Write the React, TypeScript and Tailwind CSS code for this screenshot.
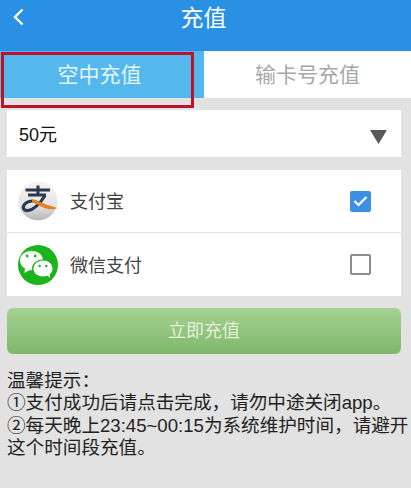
const cjk = "font-['Liberation_Sans','Noto_Sans_CJK_SC',sans-serif]";

function AlipayIcon() {
  return (
    <svg width="40" height="40" viewBox="0 0 40 40">
      <defs>
        <linearGradient id="ali" x1="0" y1="0" x2="0" y2="1">
          <stop offset="0" stopColor="#f5f3ef" />
          <stop offset="0.6" stopColor="#e6e5e5" />
          <stop offset="1" stopColor="#b4b5b9" />
        </linearGradient>
      </defs>
      <circle cx="20" cy="20" r="19.500" fill="url(#ali)" />
      <path d="M20 4.500V13M7.500 9h24.500M10 14h18" fill="none" stroke="#2b3950" strokeWidth="3" />
      <path d="M27 14.500C23 21 17 28.500 10 29.500 5.500 30 4 26.500 6.500 23.500 8.500 21 12 20 15 20" fill="none" stroke="#2b3950" strokeWidth="3.200" />
      <path d="M14 18.500c5.500 0 9 3.500 14 5 4 1.200 8 2.500 11.500 3.500-4 2-10 1.500-14.500-.5-4.500-1.800-7-4.500-11-5z" fill="#e8801f" />
    </svg>
  );
}

function WechatIcon() {
  return (
    <svg width="40" height="40" viewBox="0 0 40 40">
      <circle cx="20" cy="20" r="20" fill="#1cb41c" />
      <ellipse cx="13.500" cy="15.500" rx="11.500" ry="9.800" fill="#fff" />
      <path d="M7 22.500L6.500 28l6-3.500z" fill="#fff" />
      <ellipse cx="25" cy="23.500" rx="11" ry="9.300" fill="#1cb41c" />
      <ellipse cx="25" cy="23.500" rx="9.600" ry="8" fill="#fff" />
      <path d="M29 30l3 3-.6-5z" fill="#fff" />
      <circle cx="9.200" cy="11" r="1.400" fill="#1cb41c" />
      <circle cx="17.200" cy="11" r="1.400" fill="#1cb41c" />
      <circle cx="21.700" cy="21" r="1.200" fill="#1cb41c" />
      <circle cx="28.300" cy="21" r="1.200" fill="#1cb41c" />
    </svg>
  );
}

export default function App() {
  return (
    <div className={`${cjk} relative w-[411px] h-[488px] overflow-hidden bg-[#e2e2e2]`}>
      <header className="relative h-[51px] bg-[#2a90e4] flex items-start justify-center pt-[7px]">
        <svg className="absolute left-[12px] top-[8px]" width="13" height="18" viewBox="0 0 13 18">
          <path d="M10.500 1.500L3 9l7.500 7.500" fill="none" stroke="#fff" strokeWidth="2.400" />
        </svg>
        <span className="text-[23px] leading-[23px] text-white mr-[4px]">充值</span>
      </header>

      <div className="flex h-[47px]">
        <div className="w-[204px] pr-[5px] bg-[#55b8ec] flex items-center justify-center text-[21px] text-[#e4f5fb]">空中充值</div>
        <div className="flex-1 bg-white flex items-center justify-center text-[21px] text-[#a8a8a8]">输卡号充值</div>
      </div>

      <div className="absolute left-[1px] top-[52px] w-[193px] h-[56px] border-[3px] border-[#c0112c]" />

      <div className="pl-[7px] pr-[10px] pt-[12px]">
        <div className="h-[47px] bg-white flex items-center justify-between pl-[12px] pr-[14px]">
          <span className="text-[18px] text-[#111] pt-[3px]">50元</span>
          <svg className="mt-[6px]" width="17" height="14" viewBox="0 0 17 14">
            <path d="M0 0h17L8.500 14z" fill="#595959" />
          </svg>
        </div>

        <div className="mt-[13px] bg-white">
          <div className="h-[63px] flex items-center pl-[11px] pr-[30px] border-b border-[#e4e4e4]">
            <AlipayIcon />
            <span className="ml-[12px] flex-1 text-[18px] text-[#444] pt-[3px]">支付宝</span>
            <div className="w-[21px] h-[21px] rounded-[2px] bg-[#3c8fe2] flex items-center justify-center">
              <svg width="15" height="12" viewBox="0 0 15 12">
                <path d="M1.500 6l4 4 8-8" fill="none" stroke="#fff" strokeWidth="2.200" />
              </svg>
            </div>
          </div>
          <div className="h-[63px] flex items-center pl-[11px] pr-[30px]">
            <WechatIcon />
            <span className="ml-[12px] flex-1 text-[18px] text-[#444] pt-[3px]">微信支付</span>
            <div className="w-[21px] h-[21px] rounded-[2px] border-2 border-[#8d8d8d]" />
          </div>
        </div>

        <button className="mt-[12px] w-full h-[46px] rounded-[6px] bg-gradient-to-b from-[#a5d292] to-[#7fb76b] text-[18px] text-[#e3f1da]">
          立即充值
        </button>
      </div>

      <div className="mt-[16px] pl-[7px] text-[18.600px] leading-[22.400px] text-[#222] whitespace-nowrap">
        <p>温馨提示：</p>
        <p>①支付成功后请点击完成，请勿中途关闭app。</p>
        <p>②每天晚上23:45~00:15为系统维护时间，请避开</p>
        <p>这个时间段充值。</p>
      </div>
    </div>
  );
}
